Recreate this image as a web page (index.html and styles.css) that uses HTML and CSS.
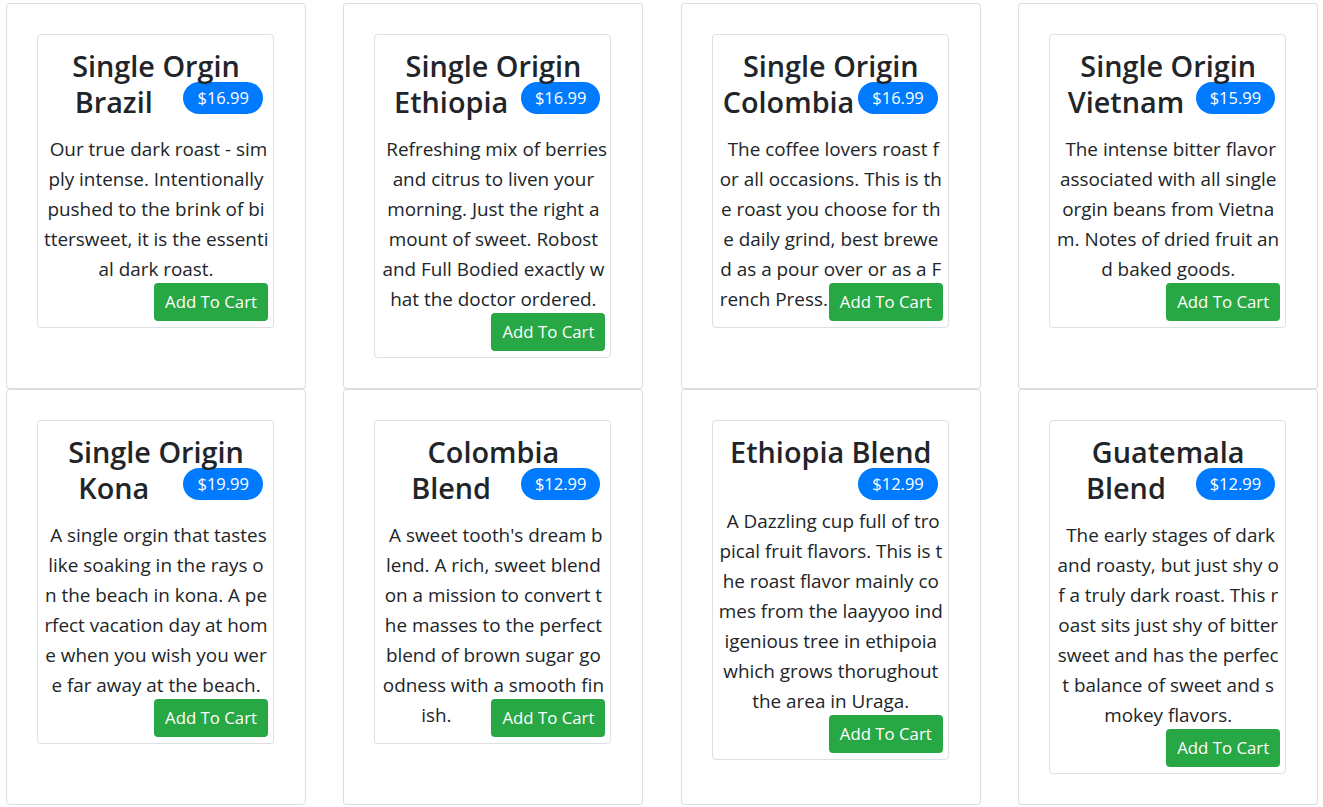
FILE: index.html
```html
<!DOCTYPE html>
<html lang="en">
<head>
<meta charset="utf-8">
<title>Coffee</title>
<link rel="stylesheet" href="styles.css">
</head>
<body>
<div class="grid">
  <div class="tile">
    <div class="card">
      <h2 class="title">Single Orgin<br>Brazil<span class="badge">$16.99</span></h2>
      <p class="desc">&nbsp;Our true dark roast - sim<br>ply intense. Intentionally<br>pushed to the brink of bi<br>ttersweet, it is the essenti<br>al dark roast.<br><button class="cart">Add To Cart</button></p>
    </div>
  </div>
  <div class="tile">
    <div class="card">
      <h2 class="title">Single Origin<br>Ethiopia<span class="badge">$16.99</span></h2>
      <p class="desc">&nbsp;Refreshing mix of berries<br>and citrus to liven your<br>morning. Just the right a<br>mount of sweet. Robost<br>and Full Bodied exactly w<br>hat the doctor ordered.<br><button class="cart">Add To Cart</button></p>
    </div>
  </div>
  <div class="tile">
    <div class="card">
      <h2 class="title">Single Origin<br>Colombia<span class="badge">$16.99</span></h2>
      <p class="desc">&nbsp;The coffee lovers roast f<br>or all occasions. This is th<br>e roast you choose for th<br>e daily grind, best brewe<br>d as a pour over or as a F<br>rench Press.<button class="cart">Add To Cart</button></p>
    </div>
  </div>
  <div class="tile">
    <div class="card">
      <h2 class="title">Single Origin<br>Vietnam<span class="badge">$15.99</span></h2>
      <p class="desc">&nbsp;The intense bitter flavor<br>associated with all single<br>orgin beans from Vietna<br>m. Notes of dried fruit an<br>d baked goods.<br><button class="cart">Add To Cart</button></p>
    </div>
  </div>
  <div class="tile">
    <div class="card">
      <h2 class="title">Single Origin<br>Kona<span class="badge">$19.99</span></h2>
      <p class="desc">&nbsp;A single orgin that tastes<br>like soaking in the rays o<br>n the beach in kona. A pe<br>rfect vacation day at hom<br>e when you wish you wer<br>e far away at the beach.<br><button class="cart">Add To Cart</button></p>
    </div>
  </div>
  <div class="tile">
    <div class="card">
      <h2 class="title">Colombia<br>Blend<span class="badge">$12.99</span></h2>
      <p class="desc">&nbsp;A sweet tooth's dream b<br>lend. A rich, sweet blend<br>on a mission to convert t<br>he masses to the perfect<br>blend of brown sugar go<br>odness with a smooth fin<br>ish.<button class="cart">Add To Cart</button></p>
    </div>
  </div>
  <div class="tile">
    <div class="card">
      <h2 class="title">Ethiopia Blend<br><span class="badge">$12.99</span></h2>
      <p class="desc">&nbsp;A Dazzling cup full of tro<br>pical fruit flavors. This is t<br>he roast flavor mainly co<br>mes from the laayyoo ind<br>igenious tree in ethipoia<br>which grows thorughout<br>the area in Uraga.<br><button class="cart">Add To Cart</button></p>
    </div>
  </div>
  <div class="tile">
    <div class="card">
      <h2 class="title">Guatemala<br>Blend<span class="badge">$12.99</span></h2>
      <p class="desc">&nbsp;The early stages of dark<br>and roasty, but just shy o<br>f a truly dark roast. This r<br>oast sits just shy of bitter<br>sweet and has the perfec<br>t balance of sweet and s<br>mokey flavors.<br><button class="cart">Add To Cart</button></p>
    </div>
  </div>
</div>
</body>
</html>
```

FILE: styles.css
```css
* {
  box-sizing: border-box;
}

html, body {
  margin: 0;
  padding: 0;
  background: #ffffff;
}

body {
  font-family: "Open Sans", "Noto Sans", "Liberation Sans", sans-serif;
  color: #212529;
}

.grid {
  display: grid;
  grid-template-columns: repeat(4, 300px);
  column-gap: 37.4px;
  row-gap: 0;
  padding: 3px 0 0 6px;
}

.tile {
  border: 1px solid rgba(0, 0, 0, 0.135);
  border-radius: 4px;
  padding: 30px 31px 30px 30px;
  background: #fff;
}

.card {
  display: flow-root;
  border: 1px solid rgba(0, 0, 0, 0.125);
  border-radius: 4px;
  padding: 11px 5px 6px 6px;
  text-align: center;
}

.title {
  margin: 0 0 13px 0;
  padding-top: 2px;
  font-size: 28.8px;
  line-height: 36px;
  font-weight: 600;
  color: #212529;
}

.badge {
  float: right;
  height: 32px;
  margin: -2px 5px 5px 0;
  padding: 6px 14px;
  border-radius: 16px;
  background: #007bff;
  color: #fff;
  font-size: 16.5px;
  line-height: 20px;
  font-weight: 400;
}

.desc {
  clear: both;
  margin: 0;
  padding-top: 1px;
  font-size: 18.9px;
  line-height: 30px;
  white-space: nowrap;
}

.cart {
  float: right;
  height: 38px;
  margin: -1px 0 0 0;
  padding: 7px 11px;
  border: 0;
  border-radius: 4px;
  background: #28a745;
  color: #fff;
  font-family: "Open Sans", "Noto Sans", "Liberation Sans", sans-serif;
  font-size: 16.8px;
  line-height: 24px;
  font-weight: 400;
}
```
